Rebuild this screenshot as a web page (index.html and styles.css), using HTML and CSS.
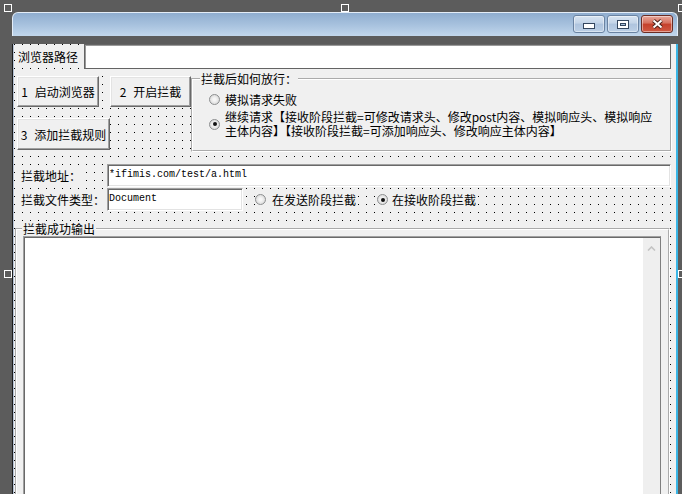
FILE: index.html
```html
<!DOCTYPE html>
<html lang="zh-CN">
<head>
    <meta charset="UTF-8">
    <title>拦截设置</title>
    <link rel="stylesheet" href="styles.css">
</head>
<body>
<div class="stage">
    <!-- sizing grips of the selected form -->
    <span class="grip grip-tl"></span>
    <span class="grip grip-tc"></span>
    <span class="grip grip-tr"></span>
    <span class="grip grip-ml"></span>
    <span class="grip grip-mr"></span>

    <div class="form-window">
        <div class="caption">
            <span class="cap-btn cap-min">
                <svg width="12" height="6" viewBox="0 0 12 6"><rect x="0.5" y="0.5" width="11" height="5" fill="#fff" stroke="#34465e"/></svg>
            </span>
            <span class="cap-btn cap-max">
                <svg width="12" height="9" viewBox="0 0 12 9"><rect x="0.5" y="0.5" width="11" height="8" fill="#fff" stroke="#34465e"/><rect x="3.5" y="3.5" width="5" height="2" fill="#a9c1dc" stroke="#34465e"/></svg>
            </span>
            <span class="cap-btn cap-close">
                <svg width="13" height="10" viewBox="0 0 13 10"><path d="M2.5 1.5 L10.5 8.5 M10.5 1.5 L2.5 8.5" stroke="#4b2119" stroke-width="4"/><path d="M2.5 1.5 L10.5 8.5 M10.5 1.5 L2.5 8.5" stroke="#fff" stroke-width="2"/></svg>
            </span>
        </div>

        <div class="client">
            <div class="row row-path">
                <span class="lbl lbl-path">浏览器路径</span>
                <div class="edit edit-path"></div>
            </div>

            <div class="row-actions">
                <div class="btn-col">
                    <div class="btn-line">
                        <button class="btn btn-start">1 启动浏览器</button>
                        <button class="btn btn-hook">2 开启拦截</button>
                    </div>
                    <button class="btn btn-rule">3 添加拦截规则</button>
                </div>
                <div class="group-wrap">
                    <fieldset class="group group-pass">
                        <legend>拦截后如何放行：</legend>
                        <div class="opt opt-fail"><span class="dot"></span><span>模拟请求失败</span></div>
                        <div class="opt opt-keep"><span class="dot on"></span><span>继续请求【接收阶段拦截=可修改请求头、修改post内容、模拟响应头、模拟响应<br>主体内容】【接收阶段拦截=可添加响应头、修改响应主体内容】</span></div>
                    </fieldset>
                </div>
            </div>

            <div class="row row-field row-url">
                <span class="lbl lbl-url">拦截地址：</span>
                <div class="edit edit-url"><span class="edit-text">*ifimis.com/test/a.html</span></div>
            </div>

            <div class="row row-field row-type">
                <span class="lbl lbl-type">拦截文件类型：</span>
                <div class="edit edit-type"><span class="edit-text">Document</span></div>
                <div class="opt opt-send"><span class="dot"></span><span>在发送阶段拦截</span></div>
                <div class="opt opt-recv"><span class="dot on"></span><span>在接收阶段拦截</span></div>
            </div>

            <fieldset class="group group-out">
                <legend>拦截成功输出</legend>
                <div class="output">
                    <div class="vscroll">
                        <svg width="9" height="5" viewBox="0 0 9 5"><path d="M1 4.5 L4.5 1 L8 4.5" fill="none" stroke="#c4c4c4" stroke-width="1.6"/></svg>
                    </div>
                </div>
            </fieldset>
        </div>
    </div>
</div>
</body>
</html>
```

FILE: styles.css
```css
* {
    margin: 0;
    padding: 0;
    box-sizing: border-box;
}

body {
    width: 682px;
    height: 494px;
    overflow: hidden;
    background: #5c5c5c;
    font-family: "Noto Sans CJK SC", "Liberation Sans", sans-serif;
    font-size: 12px;
    color: #000;
}

.stage {
    position: relative;
    height: 494px;
    padding: 12px 0 0 12px;
}

/* grips */
.grip {
    position: absolute;
    width: 8px;
    height: 8px;
    border: 1px solid #fff;
}

.grip-tl { left: 4px; top: 4px; }
.grip-tc { left: 341px; top: 4px; }
.grip-tr { left: 678px; top: 4px; }
.grip-ml { left: 4px; top: 270px; }
.grip-mr { left: 678px; top: 270px; }

.form-window {
    width: 666px;
}

/* title bar */
.caption {
    height: 24px;
    display: flex;
    justify-content: flex-end;
    align-items: flex-start;
    gap: 2px;
    padding: 2px 4px 0 0;
    border: 1px solid #e4edf7;
    border-bottom: 0;
    border-radius: 6px 6px 0 0;
    background: linear-gradient(#8fadcf, #a9c3df 55%, #c2d7ec);
}

.cap-btn {
    width: 32px;
    height: 18px;
    display: flex;
    align-items: center;
    justify-content: center;
    border: 1px solid #6a83a2;
    border-radius: 3px;
    background: linear-gradient(#d8e4f1, #c3d4e8 45%, #aec4de 50%, #bcd0e6);
    box-shadow: inset 0 0 0 1px rgba(255, 255, 255, 0.45);
}

.cap-min svg {
    margin-top: 3px;
}

.cap-close {
    border-color: #6b2c23;
    background: linear-gradient(#e8a89c, #d6705d 45%, #c5402b 50%, #d05a44);
}

/* form client area with the design grid */
.client {
    height: 470px;
    padding-left: 1px;
    border-left: 1px solid #1c1c1c;
    border-right: 2px solid #3ab6e6;
    background:
        conic-gradient(at 1px 1px, transparent 75%, #000 0) 1px 0 / 8px 8px,
        linear-gradient(90deg, #b5c2d4 1px, #f0f0f0 1px);
}

.row {
    display: flex;
    align-items: center;
}

.lbl {
    height: 20px;
    line-height: 20px;
    white-space: nowrap;
    background: #f0f0f0;
}

.edit {
    background: #fff;
    border: 1px solid;
    border-color: #a0a0a0 #fff #fff #a0a0a0;
    box-shadow: inset 1px 1px #696969, inset -1px -1px #e3e3e3;
}

.edit-text {
    display: block;
    padding-left: 1px;
    font-family: "Liberation Mono", monospace;
    font-size: 10px;
    line-height: 20px;
    white-space: nowrap;
}

.row-path {
    height: 25px;
    margin-top: 8px;
    padding-left: 4px;
}

.lbl-path {
    width: 62px;
    margin-right: 4px;
}

.edit-path {
    width: 587px;
    height: 25px;
    border-color: #646464;
    box-shadow: inset 1px 1px #9a9a9a;
}

/* buttons + first group */
.row-actions {
    display: flex;
    align-items: flex-start;
    margin-top: 3px;
}

.btn-col {
    width: 177px;
    padding: 4px 0 0 3px;
}

.btn-line {
    display: flex;
    gap: 11px;
}

.btn {
    display: block;
    height: 31px;
    padding: 0;
    font: inherit;
    word-spacing: 4px;
    color: #000;
    white-space: nowrap;
    background: #f0f0f0;
    border: 1px solid;
    border-color: #fff #696969 #696969 #fff;
    box-shadow: inset -1px -1px #a0a0a0, inset 1px 1px #e3e3e3;
}

.btn-start { width: 82px; }
.btn-hook { width: 81px; }

.btn-rule {
    width: 93px;
    height: 32px;
    margin-top: 11px;
}

.group-wrap {
    width: 481px;
    height: 80px;
    background: #f0f0f0;
}

.group {
    min-width: 0;
    padding: 0;
    border: 2px groove #fff;
}

.group legend {
    padding: 0 1px;
    line-height: 14px;
    background: #f0f0f0;
}

.group-pass {
    height: 80px;
}

.group-pass legend {
    margin-left: 7px;
}

.opt {
    display: flex;
    align-items: center;
    gap: 5px;
    white-space: nowrap;
    background: #f0f0f0;
}

.group-pass .opt {
    margin: 6px 0 0 16px;
}

.group-pass .opt-keep {
    margin-top: 4px;
}

.opt-fail {
    height: 14px;
}

.opt-keep {
    line-height: 14px;
}

.dot {
    flex: none;
    width: 11px;
    height: 11px;
    display: flex;
    align-items: center;
    justify-content: center;
    border: 1px solid #8c8e8f;
    border-radius: 50%;
    background: radial-gradient(circle, #f6f6f6 20%, #dcdcdc 75%, #ececec);
}

.dot.on::after {
    content: "";
    width: 4px;
    height: 4px;
    border-radius: 50%;
    background: #111;
}

/* address + type rows */
.row-field {
    height: 23px;
    padding-left: 7px;
}

.row-url { margin-top: 12px; }
.row-type { margin-top: 1px; }

.lbl-url {
    width: 62px;
    margin-right: 24px;
}

.lbl-type {
    width: 84px;
    margin-right: 2px;
}

.edit-url {
    width: 564px;
    height: 23px;
}

.edit-type {
    width: 136px;
    height: 23px;
}

.opt-send {
    height: 17px;
    gap: 6px;
    margin-left: 12px;
}

.opt-recv {
    height: 17px;
    gap: 4px;
    margin-left: 21px;
}

/* output group */
.group-out {
    width: 655px;
    height: 300px;
    margin: 11px 0 0 1px;
    padding: 0 7px 0 6px;
    background: #f0f0f0;
}

.group-out legend {
    margin-left: -1px;
}

.output {
    display: flex;
    justify-content: flex-end;
    height: 280px;
    padding: 1px 0 0 1px;
    background: #fff;
    border: 1px solid #7e7e7e;
    border-top-color: #a0a0a0;
    border-left-color: #a0a0a0;
    box-shadow: inset 1px 1px #696969;
}

.vscroll {
    width: 17px;
    display: flex;
    justify-content: center;
    align-items: flex-start;
    padding-top: 8px;
    background: #efefef;
}
```
